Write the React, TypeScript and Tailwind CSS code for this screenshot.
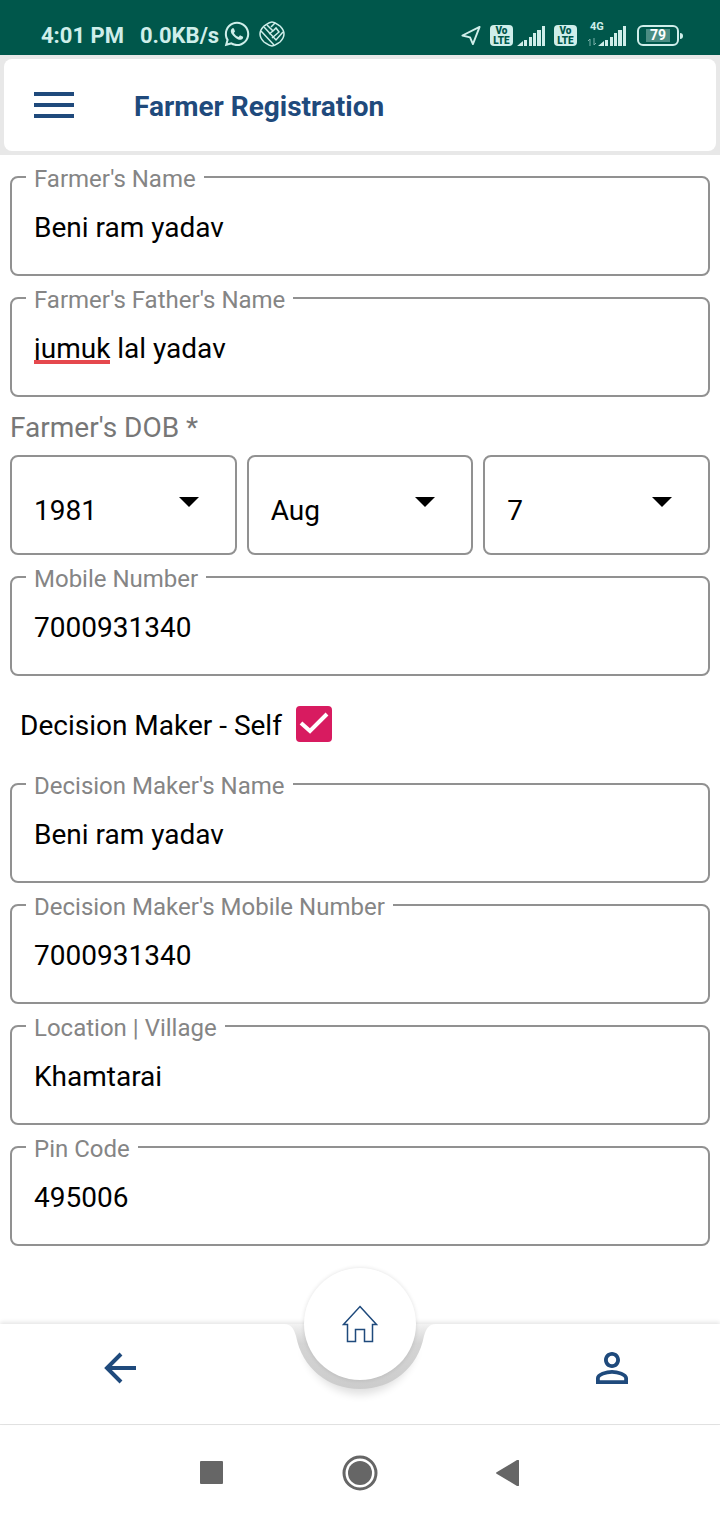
import type { ReactNode } from "react";
import { FaWhatsapp } from "react-icons/fa";

interface TextFieldProps {
  id: string;
  label: string;
  value: string;
  misspelled?: string;
}

interface DropdownProps {
  label: string;
  options: string[];
}

function TextField({ id, label, value, misspelled }: TextFieldProps) {
  return (
    <fieldset className="min-w-0 rounded-lg border-2 border-[#919191] px-[14px] pb-[10px]">
      <legend className="px-2 pt-1 text-2xl leading-[22px] text-[#858585]">
        <label htmlFor={id}>{label}</label>
      </legend>
      <div className="relative">
        <input
          id={id}
          defaultValue={value}
          spellCheck={false}
          className="block h-[74px] w-full bg-transparent px-2 text-[28px] text-black outline-none"
        />
        {misspelled && (
          <span
            aria-hidden="true"
            className="pointer-events-none absolute left-2 top-[17px] border-b-4 border-[#e5484d] text-[28px] leading-8 text-transparent"
          >
            {misspelled}
          </span>
        )}
      </div>
    </fieldset>
  );
}

function Dropdown({ label, options }: DropdownProps) {
  return (
    <div className="relative">
      <select
        aria-label={label}
        className="block h-[100px] w-full appearance-none rounded-lg border-2 border-[#919191] bg-white pl-[22px] pt-3 text-[28px] text-black outline-none"
      >
        {options.map((option) => (
          <option key={option}>{option}</option>
        ))}
      </select>
      <svg viewBox="0 0 20 10" className="pointer-events-none absolute right-[38px] top-[42px] h-[10px] w-5">
        <path d="M0 0h20L10 10z" />
      </svg>
    </div>
  );
}

function Signal() {
  return (
    <svg viewBox="0 0 28 20" className="h-5 w-7" fill="currentColor">
      <path d="M0 20l6-5v5zM7 14h3v6H7zM12 11h3v9h-3zM16 7h3v13h-3zM20 4h4v16h-4zM25 0h3v20h-3z" />
    </svg>
  );
}

function VoLte() {
  return (
    <div className="flex h-[21px] w-[23px] flex-col items-center justify-center rounded bg-[#cfeeea] text-[10px] font-black leading-[10px] text-[#00574b]">
      <span>Vo</span>
      <span>LTE</span>
    </div>
  );
}

function StatusBar() {
  return (
    <div className="flex h-[55px] items-end justify-between bg-[#00574b] pb-[7px] pl-[41px] pr-[37px] text-[#cfeeea]">
      <div className="flex items-center text-[22px] font-bold leading-6">
        <span className="pt-1">4:01 PM</span>
        <span className="ml-4 pt-1">0.0KB/s</span>
        <FaWhatsapp className="ml-1 h-7 w-7" />
        <svg viewBox="0 0 26 26" className="ml-2 h-[26px] w-[26px]" fill="none" stroke="currentColor" strokeWidth="1.5">
          <path d="M13 1c3 0 5 2 8 4 3 3 4 5 4 8s-1 5-4 8c-3 2-5 4-8 4s-5-2-8-4c-3-3-4-5-4-8s1-5 4-8c3-2 5-4 8-4z" />
          <path d="M2 10l13 14M5 6l12 13L24 11M8 4l6 6-4 3M12 6l4-4M14 10l3-3 3 4-7 6" />
        </svg>
      </div>
      <div className="flex items-end pb-[2px]">
        <svg viewBox="0 0 22 22" className="h-[21px] w-[22px]" fill="none" stroke="currentColor" strokeWidth="2" strokeLinejoin="round">
          <path d="M20 2L2 11l8 2 3 7z" />
        </svg>
        <div className="ml-2">
          <VoLte />
        </div>
        <div className="ml-1">
          <Signal />
        </div>
        <div className="ml-[9px]">
          <VoLte />
        </div>
        <div className="relative ml-[21px]">
          <span className="absolute -left-2 -top-1 text-[11px] font-bold leading-[10px]">4G</span>
          <svg viewBox="0 0 8 8" className="absolute -left-[10px] bottom-0 h-2 w-2" fill="none" stroke="currentColor" opacity="0.6">
            <path d="M2 8V1L0 3M6 0v7l2-2" />
          </svg>
          <Signal />
        </div>
        <div className="ml-[11px] flex items-center">
          <div className="flex h-[21px] w-[42px] items-center justify-center rounded-md border-2 border-current">
            <span className="bg-[#4b8d83] px-1 text-sm font-bold leading-[13px] text-white">79</span>
          </div>
          <div className="ml-px h-[6px] w-[3px] rounded-r-sm bg-current" />
        </div>
      </div>
    </div>
  );
}

function NavButton({ label, children }: { label: string; children: ReactNode }) {
  return (
    <button type="button" aria-label={label} className="flex items-center justify-center p-2">
      {children}
    </button>
  );
}

function BottomBar() {
  return (
    <nav className="relative flex h-[100px] items-start justify-between bg-white pl-24 pr-[84px] pt-5 shadow-[0_-2px_4px_rgba(0,0,0,0.1)]">
      <NavButton label="Back">
        <svg viewBox="0 0 32 32" className="h-8 w-8" fill="none" stroke="#1f4a7c" strokeWidth="4">
          <path d="M32 16H4M17 2L3 16l14 14" />
        </svg>
      </NavButton>

      {/* notch that the home button sits in */}
      <svg viewBox="0 0 160 90" className="pointer-events-none absolute left-1/2 top-0 h-[90px] w-40 -translate-x-1/2">
        <defs>
          <linearGradient id="notch" x1="0" y1="0" x2="0" y2="1">
            <stop offset="0" stopColor="#f2f2f2" />
            <stop offset="0.3" stopColor="#d4d4d4" />
            <stop offset="1" stopColor="#cccccc" />
          </linearGradient>
          <filter id="soft" x="-20%" y="-20%" width="140%" height="150%">
            <feGaussianBlur stdDeviation="4" />
          </filter>
        </defs>
        <path d="M24 26a58 60 0 0 0 112 0z" fill="#000" opacity="0.12" filter="url(#soft)" />
        <path d="M4 0C12 0 14 6 16 12C22 44 48 65 80 65S138 44 144 12C146 6 148 0 156 0z" fill="url(#notch)" />
      </svg>
      <button
        type="button"
        aria-label="Home"
        className="absolute -top-14 left-1/2 flex h-28 w-28 -translate-x-1/2 items-center justify-center rounded-full bg-white shadow-[0_0_4px_rgba(0,0,0,0.12)]"
      >
        <svg viewBox="0 0 36 38" className="h-[38px] w-9" fill="none" stroke="#1f4a7c" strokeWidth="1.5">
          <path d="M18 1.5L34.5 19.5H30.5V36.5H22.5V24.5H13.5V36.5H5.5V19.5H1.5z" />
        </svg>
      </button>

      <NavButton label="Profile">
        <svg viewBox="4 4 16 16" className="h-8 w-8" fill="#1f4a7c">
          <path d="M12 5.9a2.1 2.1 0 1 1 0 4.2 2.1 2.1 0 0 1 0-4.2m0 9c2.97 0 6.1 1.46 6.1 2.1v1.1H5.9V17c0-.64 3.13-2.1 6.1-2.1M12 4C9.79 4 8 5.79 8 8s1.79 4 4 4 4-1.79 4-4-1.79-4-4-4zm0 9c-2.67 0-8 1.34-8 4v3h16v-3c0-2.66-5.33-4-8-4z" />
        </svg>
      </NavButton>
    </nav>
  );
}

function SystemBar() {
  return (
    <div className="flex h-24 items-center justify-center border-t border-[#e4e4e4] bg-white">
      <div className="grid w-[444px] grid-cols-3 place-items-center">
        <NavButton label="Recent apps">
          <svg viewBox="0 0 24 24" className="h-6 w-6" fill="#666">
            <rect width="23" height="23" rx="1" />
          </svg>
        </NavButton>
        <NavButton label="Home screen">
          <svg viewBox="0 0 36 36" className="h-9 w-9" fill="#666">
            <circle cx="18" cy="18" r="16" fill="none" stroke="#666" strokeWidth="3" />
            <circle cx="18" cy="18" r="12" />
          </svg>
        </NavButton>
        <NavButton label="System back">
          <svg viewBox="0 0 24 26" className="h-[26px] w-6" fill="#666">
            <path d="M1 12L21 0q2-1 2 1v24q0 2-2 1L1 14q-2-1 0-2z" />
          </svg>
        </NavButton>
      </div>
    </div>
  );
}

export default function App() {
  return (
    <div className="flex min-h-screen flex-col bg-white font-['Roboto',sans-serif]">
      <StatusBar />

      <header className="bg-[#e8e8e8] p-1">
        <div className="flex h-[92px] items-center rounded-lg bg-white pl-[22px]">
          <NavButton label="Menu">
            <svg viewBox="0 0 40 26" className="h-[26px] w-10" fill="#1f4a7c">
              <path d="M0 0h40v4H0zM0 11h40v4H0zM0 22h40v4H0z" />
            </svg>
          </NavButton>
          <h1 className="ml-[52px] pt-1 text-[28px] font-bold text-[#1f4a7c]">Farmer Registration</h1>
        </div>
      </header>

      <form className="flex flex-1 flex-col gap-[9px] px-[10px] pb-[78px] pt-[9px]">
        <TextField id="farmer-name" label="Farmer's Name" value="Beni ram yadav" />
        <TextField id="father-name" label="Farmer's Father's Name" value="jumuk lal yadav" misspelled="jumuk" />
        <p className="pt-1 text-[28px] leading-9 text-[#777]">Farmer's DOB *</p>
        <div className="grid grid-cols-3 gap-[10px]">
          <Dropdown label="Year" options={["1981"]} />
          <Dropdown label="Month" options={["Aug"]} />
          <Dropdown label="Day" options={["7"]} />
        </div>
        <TextField id="mobile" label="Mobile Number" value="7000931340" />
        <label className="flex h-[77px] items-center gap-[14px] px-[10px] text-[28px] text-black">
          <span className="pt-1">Decision Maker - Self</span>
          <span className="grid">
            <input
              type="checkbox"
              defaultChecked
              className="peer col-start-1 row-start-1 h-9 w-9 appearance-none rounded border-2 border-[#777] checked:border-[#d81b60] checked:bg-[#d81b60]"
            />
            <svg
              viewBox="0 0 36 36"
              className="pointer-events-none invisible col-start-1 row-start-1 h-9 w-9 peer-checked:visible"
              fill="none"
              stroke="#fff"
              strokeWidth="4"
            >
              <path d="M5 17l9 8L31 8" />
            </svg>
          </span>
        </label>
        <TextField id="maker-name" label="Decision Maker's Name" value="Beni ram yadav" />
        <TextField id="maker-mobile" label="Decision Maker's Mobile Number" value="7000931340" />
        <TextField id="village" label="Location | Village" value="Khamtarai" />
        <TextField id="pin-code" label="Pin Code" value="495006" />
      </form>

      <BottomBar />
      <SystemBar />
    </div>
  );
}
